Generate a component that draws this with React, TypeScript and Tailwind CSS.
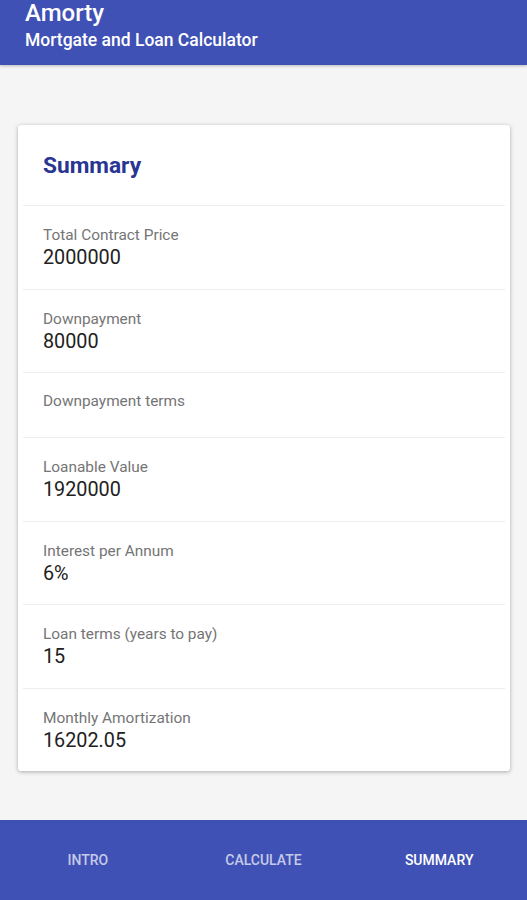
const rows = [
  { label: 'Total Contract Price', value: '2000000' },
  { label: 'Downpayment', value: '80000' },
  { label: 'Downpayment terms', value: '' },
  { label: 'Loanable Value', value: '1920000' },
  { label: 'Interest per Annum', value: '6%' },
  { label: 'Loan terms (years to pay)', value: '15' },
  { label: 'Monthly Amortization', value: '16202.05' },
];

const tabs = [
  { name: 'INTRO', active: false },
  { name: 'CALCULATE', active: false },
  { name: 'SUMMARY', active: true },
];

export default function App() {
  return (
    <div
      className="flex h-[900px] w-[527px] flex-col overflow-hidden bg-[#f5f5f5]"
      style={{ fontFamily: 'Roboto, "Noto Sans", sans-serif' }}
    >
      {/* App bar */}
      <header className="h-[65px] shrink-0 bg-[#3f51b5] px-[25px] text-white shadow-[0_1px_3px_rgba(0,0,0,0.25)]">
        <h1 className="text-[24px] font-medium leading-[26px]">Amorty</h1>
        <p className="text-[17.5px] font-medium leading-[28px]">Mortgate and Loan Calculator</p>
      </header>

      {/* Content */}
      <main className="flex-1 px-[18px] pt-[60px]">
        <section className="w-[492px] rounded-[3px] bg-white px-[5px] shadow-[0_1px_4px_rgba(0,0,0,0.3)]">
          <div className="flex h-[80px] items-center px-[20px] pt-[2px]">
            <h2 className="text-[22.7px] font-bold text-[#283593]">Summary</h2>
          </div>
          {rows.map((row) => (
            <div
              key={row.label}
              className={`border-t border-[#eeeeee] px-[20px] ${row.value ? 'pt-[18px] pb-[18.5px]' : 'pt-[17px] pb-[25px]'}`}
            >
              <div className="text-[15.4px] leading-[22px] text-[#757575]">{row.label}</div>
              {row.value && (
                <div className="text-[19.8px] leading-[24px] text-[#212121]">{row.value}</div>
              )}
            </div>
          ))}
        </section>
      </main>

      {/* Bottom tabs */}
      <nav className="grid h-[80px] shrink-0 grid-cols-3 bg-[#3f51b5]">
        {tabs.map((tab) => (
          <div
            key={tab.name}
            className={`flex items-center justify-center text-[14px] font-medium ${tab.active ? 'text-white' : 'text-[#c5cae9]'}`}
          >
            {tab.name}
          </div>
        ))}
      </nav>
    </div>
  );
}
